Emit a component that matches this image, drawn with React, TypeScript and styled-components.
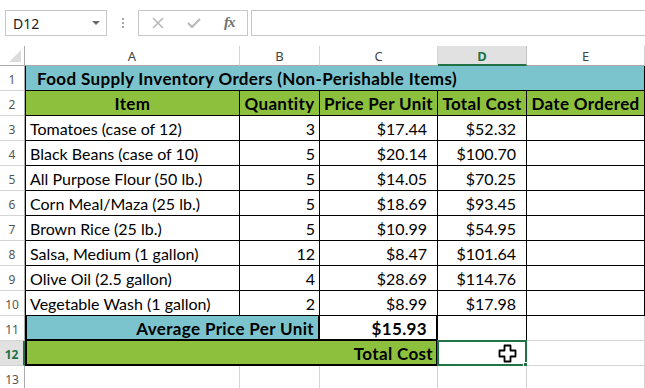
import React from 'react';
import styled, { createGlobalStyle } from 'styled-components';

const GlobalStyle = createGlobalStyle`
  html, body {
    margin: 0;
    padding: 0;
    background: #ffffff;
    overflow: hidden;
  }
  * {
    box-sizing: border-box;
  }
`;

const TEAL = '#7cc4cd';
const GREEN = '#8dc03c';
const GRID = '#d4d4d4';
const SELECT = '#217346';

type Edge = 'thin' | 'thick' | undefined;

const edge = (e: Edge, fallback: string) =>
  e === 'thick' ? '2px solid #000' : e === 'thin' ? '1px solid #000' : fallback;

const Page = styled.div`
  width: 645px;
  height: 388px;
  overflow: hidden;
  background: #fff;
  font-family: Lato, 'Noto Sans', sans-serif;
`;

const FormulaBar = styled.div`
  display: flex;
  align-items: flex-start;
  height: 46px;
  padding: 10px 0 0 5px;
`;

const NameBox = styled.div`
  display: flex;
  align-items: center;
  justify-content: space-between;
  width: 102px;
  height: 26px;
  border: 1px solid #c6c6c6;
  padding: 0 6px 0 7px;
  font-family: 'Noto Sans', sans-serif;
  font-size: 14px;
  color: #222;
`;

const Caret = styled.span`
  width: 0;
  height: 0;
  border-left: 4px solid transparent;
  border-right: 4px solid transparent;
  border-top: 4px solid #6a6a6a;
`;

const Dots = styled.div`
  display: flex;
  flex-direction: column;
  justify-content: center;
  gap: 2px;
  width: 31px;
  height: 26px;
  align-items: center;
`;

const Dot = styled.span`
  width: 2px;
  height: 2px;
  background: #a8a8a8;
`;

const ActionBox = styled.div`
  display: flex;
  align-items: center;
  width: 110px;
  height: 26px;
  border: 1px solid #c6c6c6;
  padding: 0 0 0 13px;
  gap: 23px;
`;

const Fx = styled.span`
  font-family: 'Liberation Serif', serif;
  font-style: italic;
  font-weight: 700;
  font-size: 15px;
  color: #707070;
  letter-spacing: -1px;
  margin-top: -2px;
`;

const FormulaInput = styled.div`
  flex: 1;
  height: 26px;
  margin-left: 3px;
  border: 1px solid #c6c6c6;
  border-right: none;
`;

const Sheet = styled.div`
  display: grid;
  grid-template-columns: 25px 215px 80px 118px 89px 118px;
  grid-template-rows: 20px repeat(13, 25px);
`;

const Corner = styled.div`
  position: relative;
  border-right: 1px solid #ababab;
  border-bottom: 1px solid #ababab;
`;

const Triangle = styled.span`
  position: absolute;
  right: 3px;
  bottom: 3px;
  width: 0;
  height: 0;
  border-left: 12px solid transparent;
  border-bottom: 12px solid #dcdcdc;
`;

const ColHead = styled.div<{ $active?: boolean }>`
  display: flex;
  align-items: center;
  justify-content: center;
  font-family: 'Noto Sans', sans-serif;
  font-size: 13px;
  padding-top: 1px;
  color: ${(p) => (p.$active ? SELECT : '#444')};
  font-weight: ${(p) => (p.$active ? 700 : 400)};
  background: ${(p) => (p.$active ? '#e1e1e1' : '#fff')};
  border-right: 1px solid ${(p) => (p.$active ? '#c0c0c0' : GRID)};
  border-bottom: ${(p) => (p.$active ? `2px solid ${SELECT}` : '1px solid #ababab')};
`;

const RowHead = styled.div<{ $active?: boolean }>`
  display: flex;
  align-items: center;
  justify-content: center;
  font-family: 'Noto Sans', sans-serif;
  font-size: 12px;
  padding-top: 2px;
  color: ${(p) => (p.$active ? SELECT : '#555')};
  font-weight: ${(p) => (p.$active ? 700 : 400)};
  background: ${(p) => (p.$active ? '#e1e1e1' : '#fff')};
  border-right: ${(p) => (p.$active ? `2px solid ${SELECT}` : '1px solid #ababab')};
  border-bottom: 1px solid ${GRID};
`;

const Cell = styled.div<{
  $span?: number;
  $bg?: string;
  $align?: 'left' | 'center' | 'right';
  $bold?: boolean;
  $pad?: number;
  $r?: Edge;
  $b?: Edge;
  $l?: Edge;
  $t?: Edge;
}>`
  position: relative;
  grid-column: span ${(p) => p.$span || 1};
  display: flex;
  align-items: center;
  justify-content: ${(p) =>
    p.$align === 'right' ? 'flex-end' : p.$align === 'center' ? 'center' : 'flex-start'};
  padding: 1px ${(p) => (p.$align === 'right' ? p.$pad ?? 4 : 1)}px 0
    ${(p) => (p.$align === 'left' || !p.$align ? p.$pad ?? 4 : 1)}px;
  background: ${(p) => p.$bg || '#fff'};
  font-size: ${(p) => (p.$bold ? 17 : 16)}px;
  letter-spacing: ${(p) => (p.$bold ? '0.35px' : 'normal')};
  font-weight: ${(p) => (p.$bold ? 700 : 400)};
  color: #000;
  white-space: nowrap;
  border-right: ${(p) => edge(p.$r, `1px solid ${GRID}`)};
  border-bottom: ${(p) => edge(p.$b, `1px solid ${GRID}`)};
  border-left: ${(p) => edge(p.$l, 'none')};
  border-top: ${(p) => edge(p.$t, 'none')};
`;

const Selection = styled.div`
  position: absolute;
  left: -1px;
  top: -1px;
  right: -1px;
  bottom: -1px;
  border: 2px solid ${SELECT};
  pointer-events: none;
`;

const Handle = styled.span`
  position: absolute;
  right: -4px;
  bottom: -4px;
  width: 6px;
  height: 6px;
  background: ${SELECT};
  border: 1px solid #fff;
`;

const Pointer = styled.svg`
  position: absolute;
  left: 60px;
  top: 3px;
`;

const items: [string, string, string, string][] = [
  ['Tomatoes (case of 12)', '3', '$17.44', '$52.32'],
  ['Black Beans (case of 10)', '5', '$20.14', '$100.70'],
  ['All Purpose Flour (50 lb.)', '5', '$14.05', '$70.25'],
  ['Corn Meal/Maza (25 lb.)', '5', '$18.69', '$93.45'],
  ['Brown Rice (25 lb.)', '5', '$10.99', '$54.95'],
  ['Salsa, Medium (1 gallon)', '12', '$8.47', '$101.64'],
  ['Olive Oil (2.5 gallon)', '4', '$28.69', '$114.76'],
  ['Vegetable Wash (1 gallon)', '2', '$8.99', '$17.98'],
];

const headers = ['Item', 'Quantity', 'Price Per Unit', 'Total Cost', 'Date Ordered'];

const App: React.FC = () => {
  return (
    <Page>
      <GlobalStyle />
      <FormulaBar>
        <NameBox>
          D12
          <Caret />
        </NameBox>
        <Dots>
          <Dot />
          <Dot />
          <Dot />
        </Dots>
        <ActionBox>
          <svg width="12" height="12" viewBox="0 0 12 12">
            <path d="M1 1 L11 11 M11 1 L1 11" stroke="#b9b9b9" strokeWidth="1.6" />
          </svg>
          <svg width="14" height="12" viewBox="0 0 14 12">
            <path d="M1 6 L5 10 L13 2" stroke="#b9b9b9" strokeWidth="2.2" fill="none" />
          </svg>
          <Fx>fx</Fx>
        </ActionBox>
        <FormulaInput />
      </FormulaBar>

      <Sheet>
        <Corner>
          <Triangle />
        </Corner>
        {['A', 'B', 'C', 'D', 'E'].map((c) => (
          <ColHead key={c} $active={c === 'D'}>
            {c}
          </ColHead>
        ))}

        {/* row 1 */}
        <RowHead>1</RowHead>
        <Cell $span={5} $bg={TEAL} $bold $pad={11} $r="thin" $b="thin" $l="thin">
          Food Supply Inventory Orders (Non-Perishable Items)
        </Cell>

        {/* row 2 */}
        <RowHead>2</RowHead>
        {headers.map((h, i) => (
          <Cell key={h} $bg={GREEN} $bold $align="center" $r="thin" $b="thin" $l={i === 0 ? 'thin' : undefined}>
            {h}
          </Cell>
        ))}

        {items.map((row, i) => (
          <React.Fragment key={row[0]}>
            <RowHead>{i + 3}</RowHead>
            <Cell $r="thin" $b="thin" $l="thin">
              {row[0]}
            </Cell>
            <Cell $align="right" $r="thin" $b="thin">
              {row[1]}
            </Cell>
            <Cell $align="right" $pad={10} $r="thin" $b="thin">
              {row[2]}
            </Cell>
            <Cell $align="right" $pad={10} $r="thin" $b="thin">
              {row[3]}
            </Cell>
            <Cell $r="thin" $b="thin" />
          </React.Fragment>
        ))}

        {/* row 11 */}
        <RowHead>11</RowHead>
        <Cell $span={2} $bg={TEAL} $bold $align="right" $pad={4} $l="thick" $r="thick" $b="thick">
          Average Price Per Unit
        </Cell>
        <Cell $bold $align="right" $pad={9} $r="thick" $b="thick">
          $15.93
        </Cell>
        <Cell $r="thin" />
        <Cell />

        {/* row 12 */}
        <RowHead $active>12</RowHead>
        <Cell $span={3} $bg={GREEN} $bold $align="right" $pad={3} $l="thick" $r="thick" $b="thick">
          Total Cost
        </Cell>
        <Cell>
          <Selection>
            <Handle />
          </Selection>
          <Pointer width="19" height="19" viewBox="0 0 19 19">
            <path
              d="M6.5 1.5 H12.5 V6.5 H17.5 V12.5 H12.5 V17.5 H6.5 V12.5 H1.5 V6.5 H6.5 Z"
              fill="#fff"
              stroke="#000"
              strokeWidth="1.8"
              strokeLinejoin="round"
            />
          </Pointer>
        </Cell>
        <Cell />

        {/* row 13 */}
        <RowHead>13</RowHead>
        <Cell />
        <Cell />
        <Cell />
        <Cell />
        <Cell />
      </Sheet>
    </Page>
  );
};

export default App;
